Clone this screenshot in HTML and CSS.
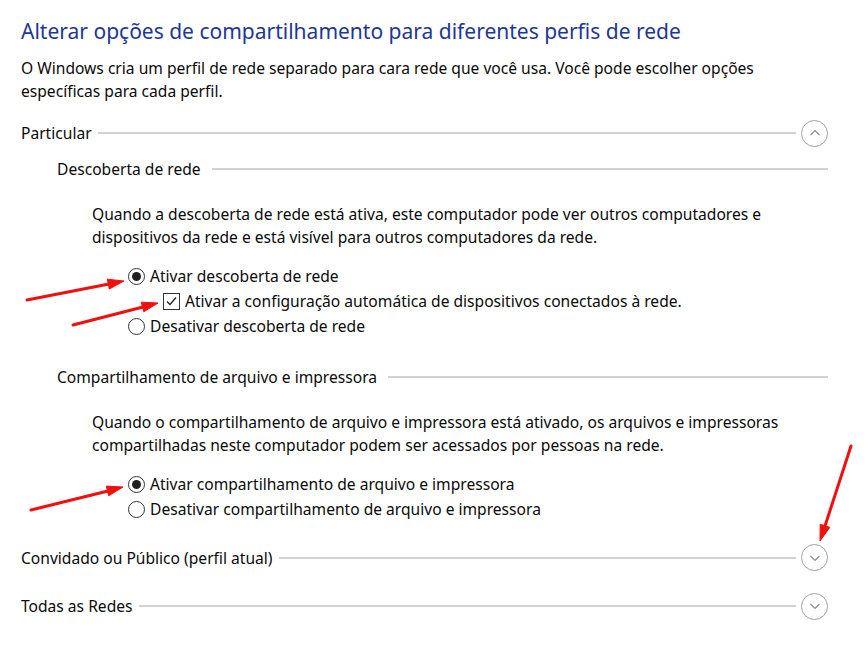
FILE: index.html
```html
<!DOCTYPE html>
<html lang="pt-BR">
<head>
<meta charset="utf-8">
<title>Alterar opções de compartilhamento</title>
<link rel="stylesheet" href="styles.css">
</head>
<body>
<div class="page">
  <h1 class="title">Alterar opções de compartilhamento para diferentes perfis de rede</h1>
  <p class="intro">O Windows cria um perfil de rede separado para cara rede que você usa. Você pode escolher opções específicas para cada perfil.</p>

  <div class="section-head first">
    <span class="section-label">Particular</span>
    <span class="rule"></span>
    <span class="toggle"><svg width="12" height="8" viewBox="0 0 12 8"><path d="M1.5 6 L6 1.5 L10.5 6" fill="none" stroke="#8a8a8a" stroke-width="1.1"/></svg></span>
  </div>

  <div class="sub-head first-sub">
    <span class="sub-label">Descoberta de rede</span>
    <span class="rule"></span>
  </div>
  <p class="desc">Quando a descoberta de rede está ativa, este computador pode ver outros computadores e dispositivos da rede e está visível para outros computadores da rede.</p>
  <div class="options">
    <div class="opt"><span class="radio checked"></span><span>Ativar descoberta de rede</span></div>
    <div class="opt sub-opt"><span class="check"><svg width="13" height="13" viewBox="0 0 13 13"><path d="M2 6.5 L5 9.5 L11 2.5" fill="none" stroke="#222" stroke-width="1.3"/></svg></span><span>Ativar a configuração automática de dispositivos conectados à rede.</span></div>
    <div class="opt"><span class="radio"></span><span>Desativar descoberta de rede</span></div>
  </div>

  <div class="sub-head second-sub">
    <span class="sub-label">Compartilhamento de arquivo e impressora</span>
    <span class="rule"></span>
  </div>
  <p class="desc">Quando o compartilhamento de arquivo e impressora está ativado, os arquivos e impressoras compartilhadas neste computador podem ser acessados por pessoas na rede.</p>
  <div class="options">
    <div class="opt"><span class="radio checked"></span><span>Ativar compartilhamento de arquivo e impressora</span></div>
    <div class="opt"><span class="radio"></span><span>Desativar compartilhamento de arquivo e impressora</span></div>
  </div>

  <div class="section-head guest">
    <span class="section-label">Convidado ou Público (perfil atual)</span>
    <span class="rule"></span>
    <span class="toggle"><svg width="12" height="8" viewBox="0 0 12 8"><path d="M1.5 2 L6 6.5 L10.5 2" fill="none" stroke="#8a8a8a" stroke-width="1.1"/></svg></span>
  </div>

  <div class="section-head all">
    <span class="section-label">Todas as Redes</span>
    <span class="rule"></span>
    <span class="toggle"><svg width="12" height="8" viewBox="0 0 12 8"><path d="M1.5 2 L6 6.5 L10.5 2" fill="none" stroke="#8a8a8a" stroke-width="1.1"/></svg></span>
  </div>
</div>

<svg class="annotations" width="867" height="658" viewBox="0 0 867 658">
  <g fill="#f01010" stroke="#f01010">
    <line x1="27" y1="300" x2="109" y2="284" stroke-width="3" stroke-linecap="round"/>
    <polygon points="124,281 109.3,289 107.3,279.2" stroke-width="1"/>
    <line x1="73" y1="325" x2="143" y2="307" stroke-width="3" stroke-linecap="round"/>
    <polygon points="158,303 143.8,311.8 141.2,302.2" stroke-width="1"/>
    <line x1="31" y1="510" x2="108" y2="491" stroke-width="3" stroke-linecap="round"/>
    <polygon points="123,487 108.7,495.8 106.3,486.1" stroke-width="1"/>
    <line x1="851" y1="446" x2="825" y2="526" stroke-width="3" stroke-linecap="round"/>
    <polygon points="820,541 829.8,527.4 820.2,524.2" stroke-width="1"/>
  </g>
</svg>
</body>
</html>
```
FILE: styles.css
```css
html, body {
  margin: 0;
  padding: 0;
  background: #ffffff;
}
body {
  font-family: "Segoe UI", "Noto Sans", "Open Sans", sans-serif;
  font-size: 15.6px;
  color: #0a0a0a;
  position: relative;
  width: 867px;
  height: 658px;
  overflow: hidden;
}
.page {
  padding: 17px 39px 0 21px;
}
.title {
  margin: 0;
  font-size: 21px;
  font-weight: 400;
  line-height: 28px;
  color: #1e3796;
}
.intro {
  margin: 11.5px 0 0;
  line-height: 23px;
}
.section-head {
  display: flex;
  align-items: center;
  height: 28px;
}
.section-head.first { margin-top: 16.5px; }
.section-head.guest { margin-top: 22px; }
.section-head.all { margin-top: 20.5px; }
.rule {
  flex: 1;
  height: 2px;
  background: #d2d2d2;
  margin-left: 6px;
}
.toggle {
  border: 1px solid #a0a0a0;
  border-radius: 50%;
  margin-left: 5px;
  display: flex;
  align-items: center;
  justify-content: center;
  box-sizing: border-box;
  width: 27px;
  height: 27px;
}
.sub-head {
  display: flex;
  align-items: center;
  height: 23px;
  padding-left: 36px;
}
.sub-head.first-sub { margin-top: 10.5px; }
.sub-head.second-sub { margin-top: 27px; }
.sub-head .rule { margin-left: 11px; }
.desc {
  margin: 22px 0 0;
  padding-left: 71px;
  line-height: 23px;
}
.options {
  margin-top: 15px;
  padding-left: 107px;
}
.opt {
  display: flex;
  align-items: center;
  height: 25px;
  gap: 5px;
}
.sub-opt {
  padding-left: 35px;
}
.radio {
  width: 17px;
  height: 17px;
  box-sizing: border-box;
  border: 1px solid #333;
  border-radius: 50%;
  display: flex;
  align-items: center;
  justify-content: center;
  flex: none;
}
.radio.checked::after {
  content: "";
  width: 9px;
  height: 9px;
  border-radius: 50%;
  background: #1f1f1f;
}
.check {
  width: 17px;
  height: 17px;
  box-sizing: border-box;
  border: 1px solid #333;
  display: flex;
  align-items: center;
  justify-content: center;
  flex: none;
}
.annotations {
  position: absolute;
  left: 0;
  top: 0;
  pointer-events: none;
}
```
